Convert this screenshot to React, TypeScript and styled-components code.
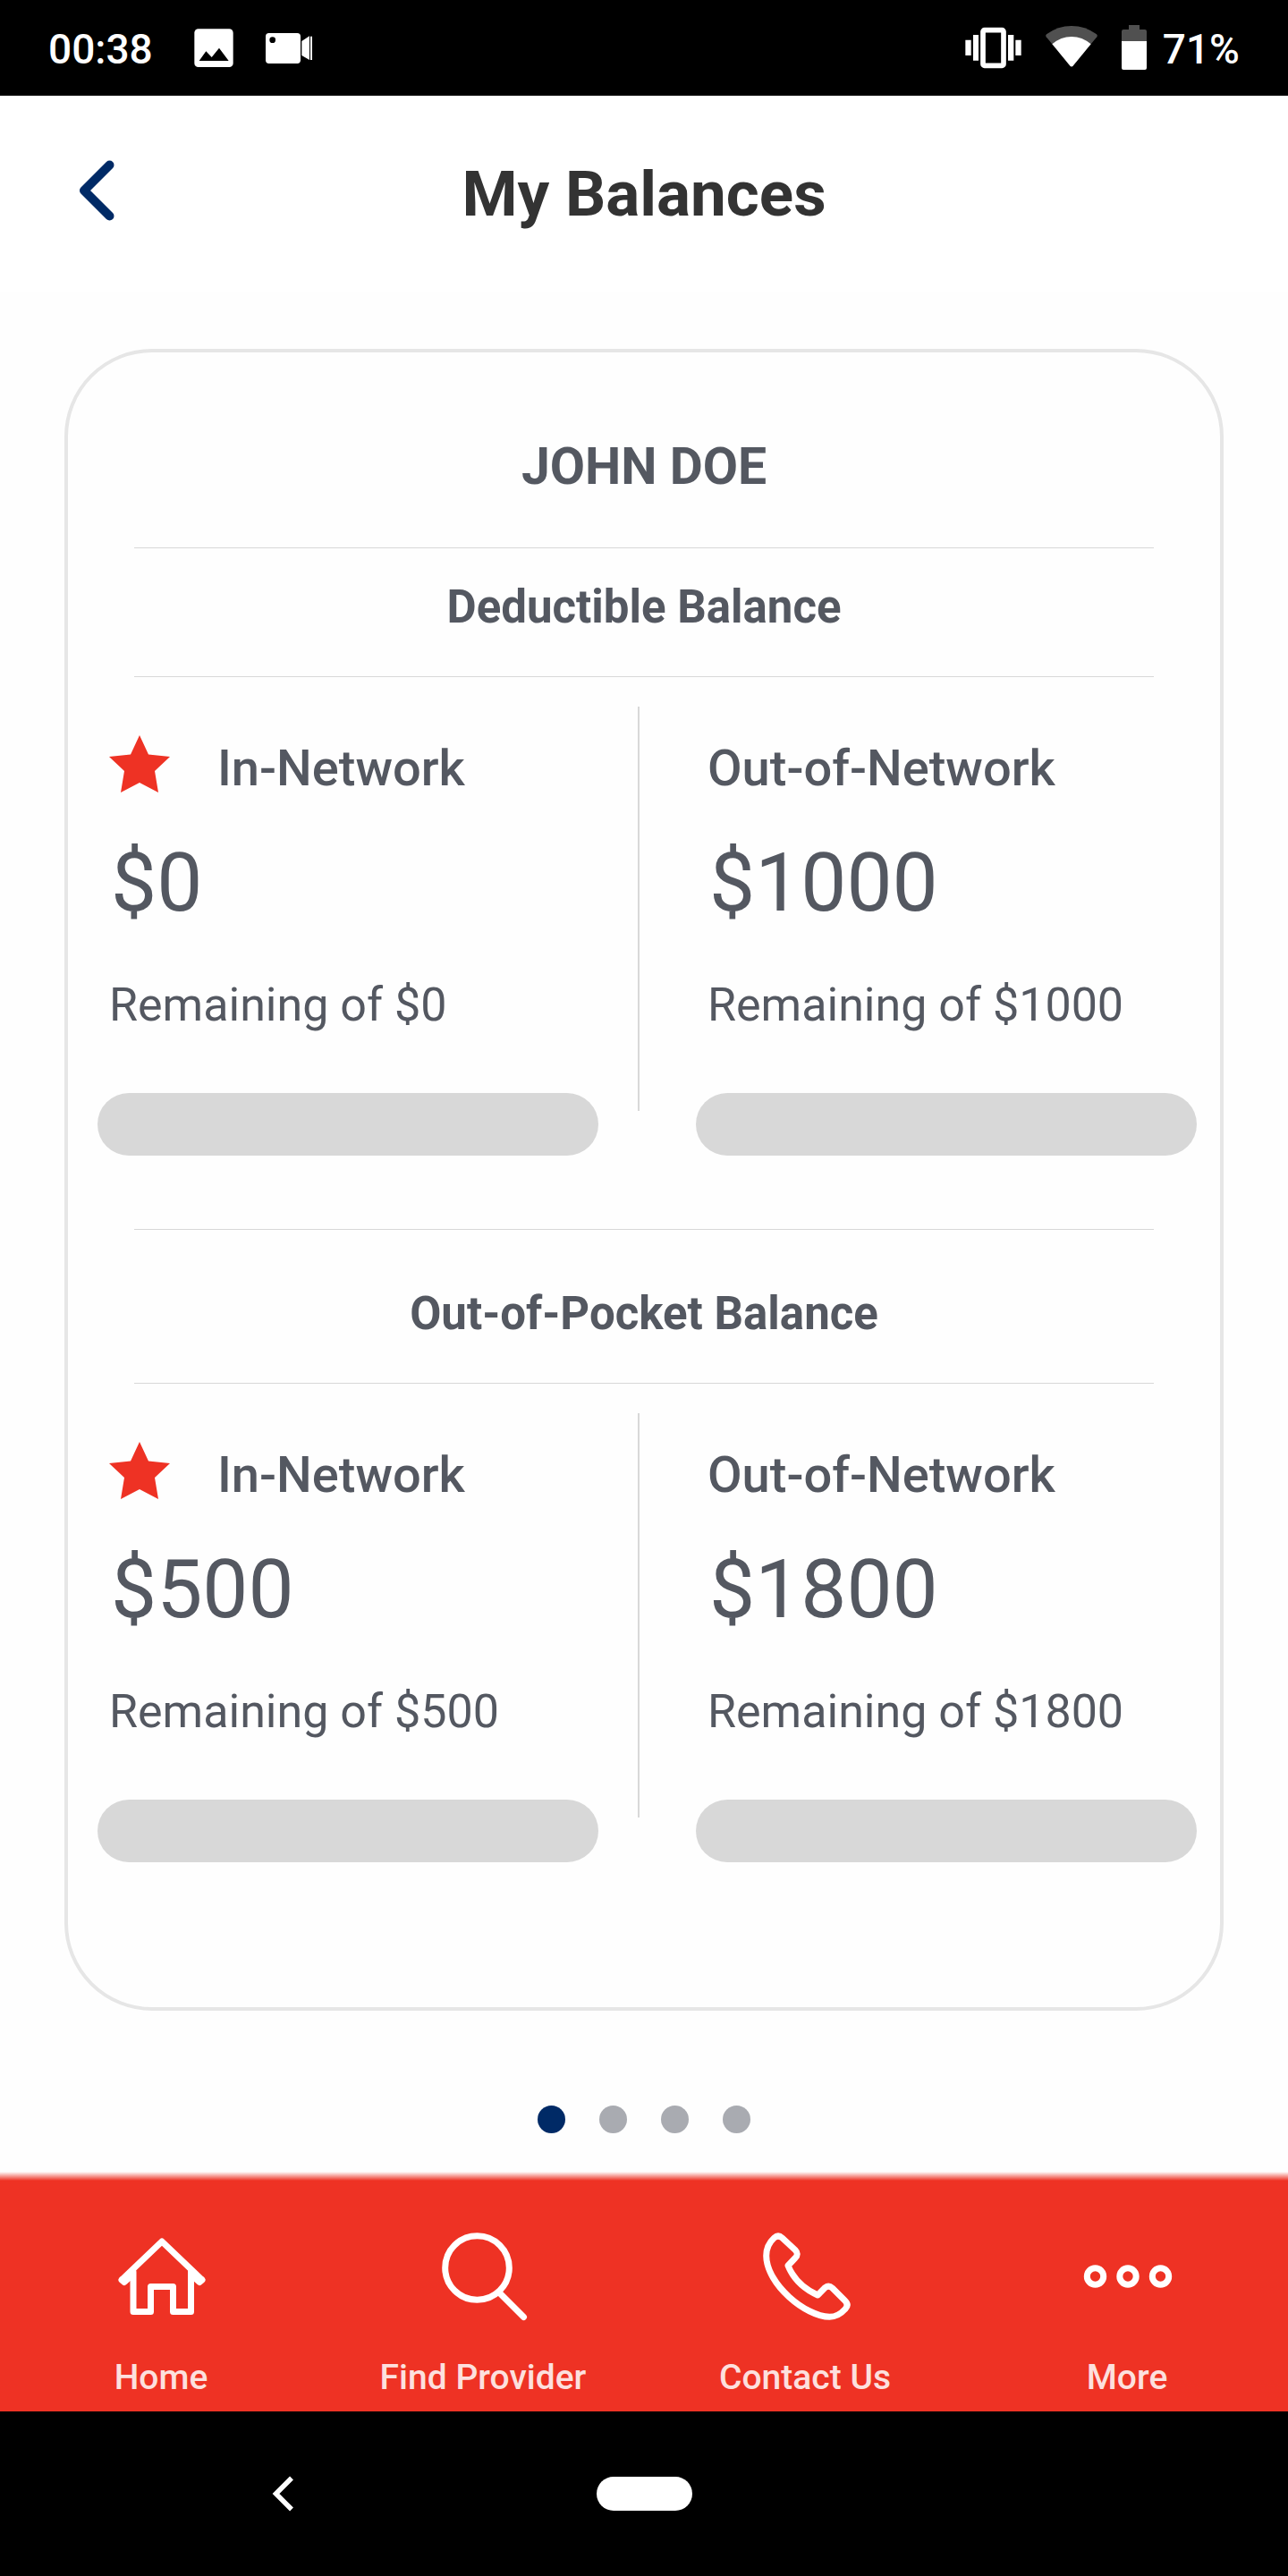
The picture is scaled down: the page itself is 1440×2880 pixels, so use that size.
import React from "react";
import styled, { createGlobalStyle } from "styled-components";

const GlobalStyle = createGlobalStyle`
  *, *::before, *::after { box-sizing: border-box; }
  body { margin: 0; background: #fff; }
  body, button { font-family: Roboto, "Liberation Sans", sans-serif; }
  h1, h2, h3, h4, p { margin: 0; }
  button { border: 0; padding: 0; background: none; cursor: pointer; }
  svg { display: block; flex: none; overflow: visible; }
`;

const ink = "#545861";
const navy = "#002a66";
const red = "#ee3224";
const line = "#d8d8d8";

const Screen = styled.div`
  display: flex;
  flex-direction: column;
  min-height: 100vh;
  background: #fefefe;
  color: ${ink};
`;

const StatusBar = styled.div`
  display: flex;
  align-items: center;
  justify-content: space-between;
  height: 107px;
  padding: 3px 54px 0;
  background: #000;
  color: #fff;
  font-size: 46px;
  line-height: 54px;
  font-weight: 500;
`;

const StatusGroup = styled.div<{ $gap: number }>`
  display: flex;
  align-items: center;
  gap: ${(p) => p.$gap}px;
`;

const Clock = styled.time`
  margin-right: 10px;
`;

const Battery = styled.div`
  display: flex;
  align-items: center;
  gap: 18px;
`;

const Header = styled.header`
  display: grid;
  grid-template-columns: 1fr auto 1fr;
  align-items: center;
  height: 220px;
  padding: 0 88px;
  background: #fff;
`;

const BackButton = styled.button`
  justify-self: start;
`;

const PageTitle = styled.h1`
  color: #333;
  font-size: 71px;
  line-height: 80px;
  font-weight: 700;
`;

const Main = styled.main`
  display: flex;
  flex: 1;
  flex-direction: column;
  padding: 63px 72px 43px;
`;

const Card = styled.article`
  padding-bottom: 80px;
  border: 4px solid #e6e6e6;
  border-radius: 98px;
`;

const MemberName = styled.h2`
  padding: 96px 0 58px;
  text-align: center;
  font-size: 57px;
  line-height: 64px;
  font-weight: 700;
`;

const SectionTitle = styled.h3<{ $top: number }>`
  margin: 0 74px;
  padding: ${(p) => p.$top}px 0 47px;
  border: solid ${line};
  border-width: 1px 0;
  text-align: center;
  font-size: 51px;
  line-height: 60px;
  font-weight: 700;
`;

const Balances = styled.div`
  display: flex;
  padding: 33px 26px 82px 33px;
`;

const Divider = styled.div`
  width: 2px;
  margin: 0 63px 50px 44px;
  background: ${line};
`;

const BalanceColumn = styled.section`
  display: flex;
  flex: 1;
  flex-direction: column;
  padding-top: 32px;
`;

const NetworkRow = styled.div`
  display: flex;
  align-items: center;
  gap: 53px;
  min-height: 74px;
  padding-left: 13px;
`;

const NetworkName = styled.h4`
  font-size: 56px;
  line-height: 64px;
  font-weight: 500;
`;

const Amount = styled.p`
  margin-top: 38px;
  padding-left: 15px;
  font-size: 91px;
  line-height: 106px;
`;

const Remaining = styled.label`
  margin-top: 54px;
  padding-left: 13px;
  font-size: 52px;
  line-height: 60px;
`;

const Meter = styled.progress`
  appearance: none;
  width: 100%;
  height: 70px;
  margin-top: 68px;
  border: 0;
  border-radius: 35px;
  overflow: hidden;
  background: ${line};
  &::-webkit-progress-bar { background: ${line}; }
  &::-webkit-progress-value { background: ${navy}; }
`;

const Pager = styled.div`
  display: flex;
  justify-content: center;
  gap: 38px;
  margin-top: 106px;
`;

const Dot = styled.button<{ $active: boolean }>`
  width: 31px;
  height: 31px;
  border-radius: 50%;
  background: ${(p) => (p.$active ? navy : "#a9abb1")};
`;

const TabBar = styled.nav`
  display: grid;
  grid-template-columns: repeat(4, 1fr);
  padding: 68px 0 14px;
  background: linear-gradient(to bottom, #fefefe 0, ${red} 10px);
`;

const Tab = styled.a`
  display: flex;
  flex-direction: column;
  align-items: center;
  gap: 40px;
  color: #fde0de;
  font-size: 39px;
  line-height: 48px;
  font-weight: 500;
  text-decoration: none;
`;

const SystemNav = styled.div`
  display: grid;
  grid-template-columns: 1fr auto 1fr;
  align-items: center;
  height: 184px;
  background: #000;
`;

const SystemBack = styled.button`
  justify-self: center;
  margin-right: 35px;
`;

const HomePill = styled.button`
  width: 107px;
  height: 38px;
  border-radius: 19px;
  background: #fff;
`;

const ImageIcon = () => (
  <svg width="44" height="54" viewBox="651 84 132 162" aria-hidden="true">
    <rect x="652" y="97" width="130" height="128" rx="13" fill="#fff" />
    <path d="M668 204 691 172 710 192 735 161 767 204Z" fill="#000" />
  </svg>
);

const VideoIcon = () => (
  <svg width="52" height="54" viewBox="891 84 156 162" aria-hidden="true">
    <rect x="891" y="111" width="117" height="102" rx="11" fill="#fff" />
    <circle cx="914" cy="134" r="10" fill="#000" />
    <path d="M1012 138 1038 121V201L1012 186ZM1041 122h6v79h-6Z" fill="#fff" />
  </svg>
);

const VibrateIcon = () => (
  <svg width="63" height="54" viewBox="360 84 189 162" aria-hidden="true">
    <rect x="420" y="101" width="69" height="119" rx="5" fill="none" stroke="#fff" strokeWidth="17" />
    <path d="M361 134h19v52h-19ZM387 117h18v86h-18ZM504 117h19v86h-19ZM529 134h19v52h-19Z" fill="#fff" />
  </svg>
);

const WifiIcon = () => (
  <svg width="58" height="54" viewBox="627 84 174 162" aria-hidden="true">
    <path d="M629 124Q625 119 630 115Q668 87 714 87T798 115Q803 119 799 124L779 148 714 160 649 148Z" fill="#505050" />
    <path d="M649 148Q678 123 714 123T779 148L720 220Q714 227 708 220Z" fill="#fff" />
  </svg>
);

const BatteryIcon = () => (
  <svg width="28" height="54" viewBox="882 84 84 162" aria-hidden="true">
    <path d="M906 84h36v15h18q6 0 6 6v33h-84v-33q0-6 6-6h18Z" fill="#505050" />
    <path d="M882 138h84v90q0 6-6 6h-72q-6 0-6-6Z" fill="#fff" />
  </svg>
);

const BackIcon = () => (
  <svg width="40" height="76" viewBox="0 0 40 76" fill="none" aria-hidden="true">
    <path d="M34.500 5.500 6 34 34.500 62.500" stroke={navy} strokeWidth="10" strokeLinecap="round" strokeLinejoin="round" />
  </svg>
);

const StarIcon = () => (
  <svg width="68" height="74" viewBox="0 0 68 74" role="img" aria-label="Your network">
    <path d="M34 0 44 21.500 68 24 51 40 55 64 34 53 13 64 17 40 0 24 24 21.500Z" fill={red} />
  </svg>
);

const TabSvg = styled.svg.attrs({ width: 98, height: 98, viewBox: "0 0 98 98", "aria-hidden": true })`
  fill: none;
  stroke: #fff;
  stroke-width: 7px;
  stroke-linecap: round;
  stroke-linejoin: round;
`;

const HomeIcon = () => (
  <TabSvg>
    <path d="M5.500 52.500 50 10 94.500 52.500" />
    <path d="M18 44V88.500H37.500V60.500H62.500V88.500H82.500V44" />
    <path d="M5 53 8 55.500 13 51M95 53 92 55.500 87 51" />
  </TabSvg>
);

const SearchIcon = () => (
  <TabSvg>
    <circle cx="42.500" cy="39.500" r="35.800" />
    <path d="M68 68 94.500 94.500" />
  </TabSvg>
);

const PhoneIcon = () => (
  <TabSvg>
    <path d="M23.500 6 38 19.500Q42.500 24 38 28.500L30 37Q39 59 63.200 70L71.500 61.500Q75.600 58.500 79.500 62L93.500 76Q98.500 81 94 85.500Q86 94.300 76.500 94.300C50 94 6 58 5.700 26Q5.700 14 14.500 6Q19 2 23.500 6Z" />
  </TabSvg>
);

const MoreIcon = () => (
  <TabSvg>
    <circle cx="13.500" cy="49" r="9.200" />
    <circle cx="50" cy="49" r="9.200" />
    <circle cx="86.500" cy="49" r="9.200" />
  </TabSvg>
);

const SystemBackIcon = () => (
  <svg width="24" height="40" viewBox="0 0 24 40" fill="none" aria-hidden="true">
    <path d="M22 2.500 4.500 20 22 37.500" stroke="#fff" strokeWidth="5.500" />
  </svg>
);

type Balance = { network: string; preferred: boolean; amount: string; total: string };
type Section = { title: string; top: number; balances: [Balance, Balance] };

const sections: Section[] = [
  {
    title: "Deductible Balance",
    top: 36,
    balances: [
      { network: "In-Network", preferred: true, amount: "$0", total: "$0" },
      { network: "Out-of-Network", preferred: false, amount: "$1000", total: "$1000" },
    ],
  },
  {
    title: "Out-of-Pocket Balance",
    top: 64,
    balances: [
      { network: "In-Network", preferred: true, amount: "$500", total: "$500" },
      { network: "Out-of-Network", preferred: false, amount: "$1800", total: "$1800" },
    ],
  },
];

const tabs = [
  { label: "Home", Icon: HomeIcon },
  { label: "Find Provider", Icon: SearchIcon },
  { label: "Contact Us", Icon: PhoneIcon },
  { label: "More", Icon: MoreIcon },
];

function BalancePanel({ balance, id }: { balance: Balance; id: string }) {
  return (
    <BalanceColumn>
      <NetworkRow>
        {balance.preferred && <StarIcon />}
        <NetworkName>{balance.network}</NetworkName>
      </NetworkRow>
      <Amount>{balance.amount}</Amount>
      <Remaining htmlFor={id}>Remaining of {balance.total}</Remaining>
      <Meter id={id} value={0} max={100} />
    </BalanceColumn>
  );
}

export default function App() {
  const [page, setPage] = React.useState(0);

  return (
    <Screen>
      <GlobalStyle />
      <StatusBar>
        <StatusGroup $gap={36}>
          <Clock>00:38</Clock>
          <ImageIcon />
          <VideoIcon />
        </StatusGroup>
        <StatusGroup $gap={27}>
          <VibrateIcon />
          <WifiIcon />
          <Battery>
            <BatteryIcon />
            <span>71%</span>
          </Battery>
        </StatusGroup>
      </StatusBar>

      <Header>
        <BackButton type="button" aria-label="Back">
          <BackIcon />
        </BackButton>
        <PageTitle>My Balances</PageTitle>
      </Header>

      <Main>
        <Card>
          <MemberName>JOHN DOE</MemberName>
          {sections.map((section, i) => (
            <React.Fragment key={section.title}>
              <SectionTitle $top={section.top}>{section.title}</SectionTitle>
              <Balances>
                <BalancePanel balance={section.balances[0]} id={`in-${i}`} />
                <Divider />
                <BalancePanel balance={section.balances[1]} id={`out-${i}`} />
              </Balances>
            </React.Fragment>
          ))}
        </Card>
        <Pager>
          {[0, 1, 2, 3].map((n) => (
            <Dot key={n} type="button" $active={n === page} aria-label={`Member ${n + 1}`} onClick={() => setPage(n)} />
          ))}
        </Pager>
      </Main>

      <TabBar>
        {tabs.map(({ label, Icon }) => (
          <Tab key={label} href="#">
            <Icon />
            {label}
          </Tab>
        ))}
      </TabBar>

      <SystemNav>
        <SystemBack type="button" aria-label="System back">
          <SystemBackIcon />
        </SystemBack>
        <HomePill type="button" aria-label="System home" />
      </SystemNav>
    </Screen>
  );
}
